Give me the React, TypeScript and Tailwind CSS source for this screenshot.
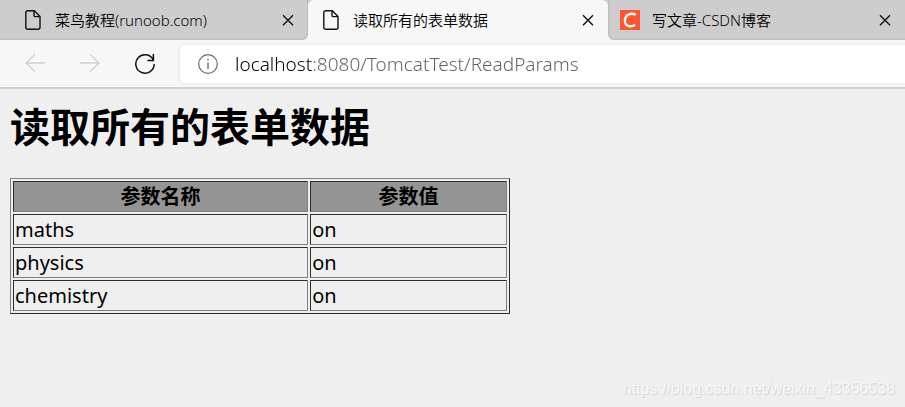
import type { ReactNode } from 'react';

const PARAMS = [
  { name: 'maths', value: 'on' },
  { name: 'physics', value: 'on' },
  { name: 'chemistry', value: 'on' },
];

function PageIcon() {
  return (
    <svg className="w-5 h-5 shrink-0" viewBox="0 0 20 20" fill="none" stroke="#111" strokeWidth="1.4" strokeLinejoin="round">
      <path d="M4.6 .8H11.4L17 6.4V17.4a1.8 1.8 0 0 1-1.8 1.8H4.6a1.8 1.8 0 0 1-1.8-1.8V2.6A1.8 1.8 0 0 1 4.6 .8Z" />
      <path d="M11 .8V5.4A1.2 1.2 0 0 0 12.2 6.6H17" />
    </svg>
  );
}

function CsdnIcon() {
  return (
    <svg className="w-5 h-5 shrink-0" viewBox="0 0 20 20" fill="none">
      <rect width="20" height="20" fill="#fc5531" />
      <path d="M15.8 4.8C11.4 2.6 5.3 4 4.9 10.4C4.6 16.4 10.6 17.6 15.2 15.1" stroke="#fff" strokeWidth="2.3" />
    </svg>
  );
}

function Tab({ icon, title, className }: { icon: ReactNode; title: string; className: string }) {
  return (
    <div className={`flex items-center h-10 pr-2.5 min-w-0 ${className}`}>
      <button role="tab" className="flex items-center gap-3 flex-1 min-w-0 text-left">
        {icon}
        <span className="truncate text-[15px] leading-5 font-[350] text-black">{title}</span>
      </button>
      <button aria-label="关闭标签页" className="w-5 h-5 shrink-0">
        <svg className="w-5 h-5" viewBox="0 0 20 20" stroke="#111" strokeWidth="1.4">
          <path d="M5 5.3 15 15.3M15 5.3 5 15.3" />
        </svg>
      </button>
    </div>
  );
}

function Toolbar() {
  return (
    <div className="flex items-center pl-[25px] pt-[5px] pb-1 border-b-2 border-[#cfcfcf]">
      <div className="flex gap-[35px] pr-[25px]">
        <button aria-label="后退" className="w-5 h-5">
          <svg className="w-5 h-5" viewBox="0 0 20 20" fill="none" stroke="#cfcfcf" strokeWidth="1.3">
            <path d="M20 9H1M10 .3 1 9 10 17.7" />
          </svg>
        </button>
        <button aria-label="前进" className="w-5 h-5">
          <svg className="w-5 h-5" viewBox="0 0 20 20" fill="none" stroke="#cfcfcf" strokeWidth="1.3">
            <path d="M0 9H19M10 .3 19 9 10 17.7" />
          </svg>
        </button>
        <button aria-label="刷新" className="w-5 h-5">
          <svg className="w-5 h-5" viewBox="0 0 20 20" fill="none" stroke="#111" strokeWidth="1.5">
            <path d="M18.2 5.8A9.2 9.2 0 1 0 19.2 10M18.4 0V6.4H12.4" />
          </svg>
        </button>
      </div>
      <div className="flex items-center flex-1 min-w-0 h-[38px] pl-[18px] gap-[17px] bg-white rounded-l-md shadow-[0_0_4px_#e2e2e2]">
        <svg className="w-5 h-5 shrink-0" viewBox="0 0 20 20" fill="none" stroke="#6b6b6b" strokeWidth="1.2">
          <circle cx="10" cy="10" r="9.3" />
          <path d="M10 8.5V15" strokeWidth="1.4" />
          <circle cx="10" cy="5.8" r=".9" fill="#6b6b6b" stroke="none" />
        </svg>
        {/* host is darker than the rest of the address */}
        <input
          aria-label="地址栏"
          defaultValue="localhost:8080/TomcatTest/ReadParams"
          spellCheck={false}
          className="flex-1 min-w-0 h-8 text-[19px] leading-8 font-[350] outline-none text-transparent bg-clip-text bg-[linear-gradient(90deg,#000_79px,#606060_79px)]"
        />
      </div>
    </div>
  );
}

export default function App() {
  return (
    <div className="min-h-screen flex flex-col bg-[#efefef] text-black font-['Noto_Sans','Noto_Sans_CJK_SC',sans-serif]">
      <header className="bg-[#f7f7f7]">
        <div role="tablist" className="grid grid-cols-[308fr_300fr_297fr]">
          <Tab icon={<PageIcon />} title="菜鸟教程(runoob.com)" className="pl-[23px] bg-[#cdcdcd] rounded-br-md shadow-[inset_-1px_-1px_1px_#bdbdbd]" />
          <div className="bg-[linear-gradient(#cdcdcd_50%,#f7f7f7_50%)]">
            <Tab icon={<PageIcon />} title="读取所有的表单数据" className="pl-[13px] bg-[#f7f7f7] rounded-t-md" />
          </div>
          <Tab icon={<CsdnIcon />} title="写文章-CSDN博客" className="pl-3 bg-[#cdcdcd] rounded-bl-md shadow-[inset_1px_-1px_1px_#bdbdbd]" />
        </div>
        <Toolbar />
      </header>

      <main className="flex-1 flex flex-col px-2.5 pt-[11px] pb-2">
        <h1 className="text-[40px] leading-[53px] font-bold mb-[25px]">读取所有的表单数据</h1>
        <table className="w-[500px] border-separate border-spacing-[2px] border border-t-[#808080] border-l-[#808080] border-b-[#2c2c2c] border-r-[#2c2c2c] text-xl leading-[27px]">
          <thead>
            <tr className="bg-[#949494]">
              <th className="w-3/5 p-px border border-t-[#2c2c2c] border-l-[#2c2c2c] border-b-[#808080] border-r-[#808080]">参数名称</th>
              <th className="p-px border border-t-[#2c2c2c] border-l-[#2c2c2c] border-b-[#808080] border-r-[#808080]">参数值</th>
            </tr>
          </thead>
          <tbody>
            {PARAMS.map((p) => (
              <tr key={p.name}>
                <td className="p-px border border-t-[#2c2c2c] border-l-[#2c2c2c] border-b-[#808080] border-r-[#808080]">{p.name}</td>
                <td className="p-px border border-t-[#2c2c2c] border-l-[#2c2c2c] border-b-[#808080] border-r-[#808080]">{p.value}</td>
              </tr>
            ))}
          </tbody>
        </table>
        <p className="mt-auto self-end text-base leading-5 text-[#f8f8f8] [text-shadow:1px_1px_1px_#d2d2d2] font-['Liberation_Sans',sans-serif]">
          https://blog.csdn.net/weixin_43356538
        </p>
      </main>
    </div>
  );
}
